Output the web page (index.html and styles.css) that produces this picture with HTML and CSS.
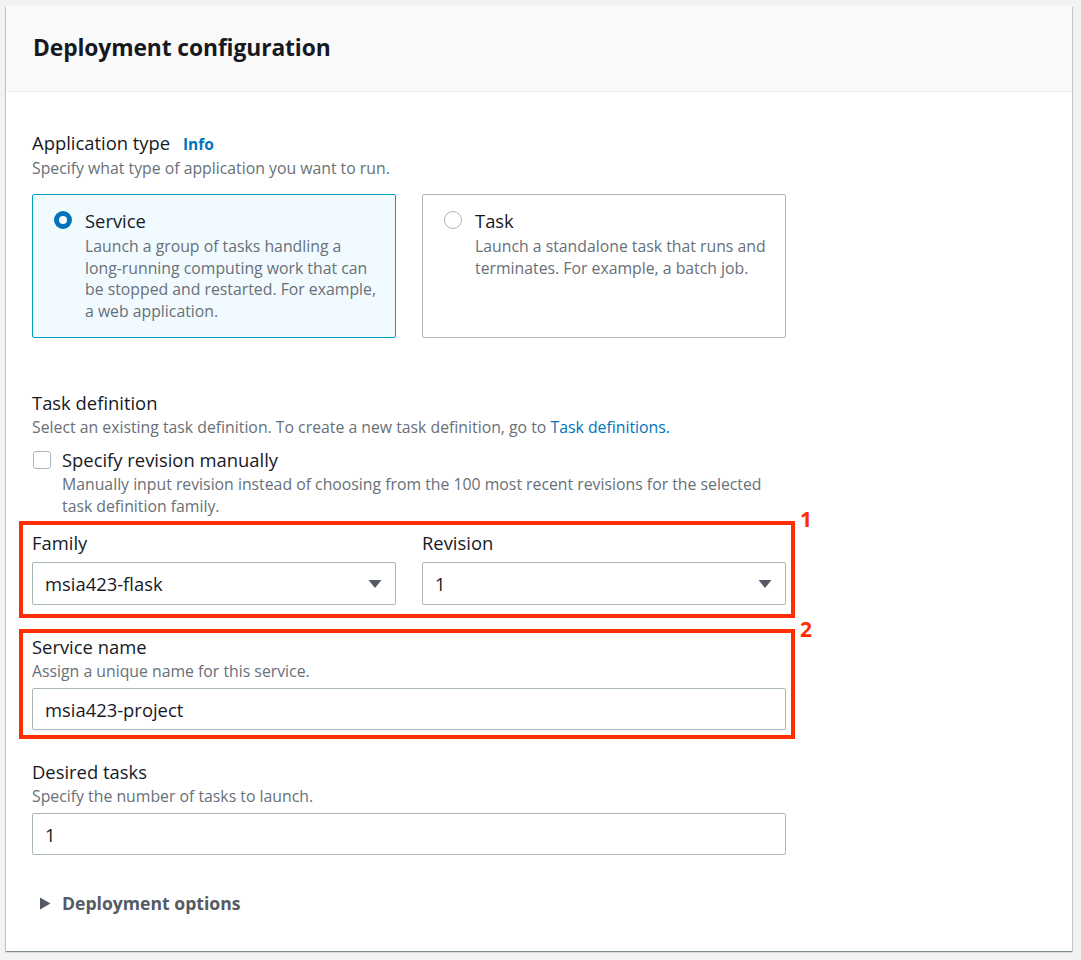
FILE: index.html
```html
<!DOCTYPE html>
<html>
<head>
<meta charset="utf-8">
<link rel="stylesheet" href="styles.css">
</head>
<body>
<div class="page">
  <div class="card">
    <div class="card-header">
      <h2 class="title">Deployment configuration</h2>
    </div>
    <div class="card-body">
      <div class="field">
        <div class="label">Application type <a class="info">Info</a></div>
        <div class="desc">Specify what type of application you want to run.</div>
        <div class="tiles">
          <div class="tile selected">
            <span class="radio on"></span>
            <div class="tile-text">
              <div class="tile-title">Service</div>
              <div class="tile-desc">Launch a group of tasks handling a long-running computing work that can be stopped and restarted. For example, a web application.</div>
            </div>
          </div>
          <div class="tile">
            <span class="radio"></span>
            <div class="tile-text">
              <div class="tile-title">Task</div>
              <div class="tile-desc">Launch a standalone task that runs and terminates. For example, a batch job.</div>
            </div>
          </div>
        </div>
      </div>

      <div class="field taskdef">
        <div class="label">Task definition</div>
        <div class="desc">Select an existing task definition. To create a new task definition, go to <a class="link">Task definitions.</a></div>
        <div class="check-row">
          <span class="checkbox"></span>
          <div class="check-text">
            <div class="check-title">Specify revision manually</div>
            <div class="desc check-desc">Manually input revision instead of choosing from the 100 most recent revisions for the selected task definition family.</div>
          </div>
        </div>
      </div>

      <div class="mark mark-one">
        <span class="mark-num">1</span>
        <div class="cols">
          <div class="col">
            <div class="label">Family</div>
            <div class="select">
              <span class="value">msia423-flask</span>
              <svg class="caret" width="14" height="10" viewBox="0 0 14 10"><path d="M0.5 1 L13.5 1 L7 9 Z" fill="#545b64"/></svg>
            </div>
          </div>
          <div class="col">
            <div class="label">Revision</div>
            <div class="select">
              <span class="value">1</span>
              <svg class="caret" width="14" height="10" viewBox="0 0 14 10"><path d="M0.5 1 L13.5 1 L7 9 Z" fill="#545b64"/></svg>
            </div>
          </div>
        </div>
      </div>

      <div class="mark mark-two">
        <span class="mark-num">2</span>
        <div class="label">Service name</div>
        <div class="desc">Assign a unique name for this service.</div>
        <div class="input">msia423-project</div>
      </div>

      <div class="field desired">
        <div class="label">Desired tasks</div>
        <div class="desc">Specify the number of tasks to launch.</div>
        <div class="input">1</div>
      </div>

      <div class="expander">
        <svg class="expand-caret" width="12" height="13" viewBox="0 0 12 13"><path d="M1 0.5 L11.5 6.5 L1 12.5 Z" fill="#545b64"/></svg>
        <span>Deployment options</span>
      </div>
    </div>
  </div>
</div>
</body>
</html>
```

FILE: styles.css
```css
* { box-sizing: border-box; }
html, body { margin: 0; padding: 0; }
body {
  background: #f2f3f3;
  font-family: "Open Sans", "Noto Sans", sans-serif;
  color: #16191f;
}
.page {
  padding: 6px 9px 0 6px;
  height: 960px;
  overflow: hidden;
}
.card {
  background: #fff;
  width: 1066px;
  height: 945px;
  box-shadow: 0 1px 1px 0 rgba(0,28,36,0.3), 1px 1px 1px 0 rgba(0,28,36,0.15), -1px 1px 1px 0 rgba(0,28,36,0.15);
}
.card-header {
  background: #fafafa;
  border-bottom: 1px solid #eaeded;
  padding: 28px 27px 29px;
}
.title {
  margin: 0;
  font-size: 22.8px;
  line-height: 28px;
  font-weight: 700;
  letter-spacing: -0.1px;
}
.card-body {
  padding: 39px 0 0 26px;
  width: 806px;
}
.field { width: 754px; }
.label {
  font-size: 18.4px;
  line-height: 24px;
  color: #16191f;
}
.info {
  color: #0073bb;
  font-weight: 700;
  font-size: 15.5px;
  margin-left: 8px;
}
.desc {
  font-size: 15.8px;
  line-height: 24px;
  color: #687078;
}
.link { color: #0073bb; }
.tiles {
  display: grid;
  grid-template-columns: 364px 364px;
  gap: 26px;
  margin-top: 14px;
}
.tile {
  display: flex;
  align-items: flex-start;
  gap: 13px;
  border: 1px solid #aab7b8;
  border-radius: 2px;
  padding: 16px 18px 16px 21px;
  height: 144px;
}
.tile.selected {
  background: #f1faff;
  border-color: #00a1c9;
}
.radio {
  flex: none;
  width: 18px;
  height: 18px;
  border-radius: 50%;
  border: 1.5px solid #aab7b8;
  background: #fff;
  margin-top: 0;
}
.radio.on {
  border: 5px solid #0073bb;
}
.tile-title {
  font-size: 18.4px;
  line-height: 20px;
}
.tile-desc {
  font-size: 15.8px;
  line-height: 21.5px;
  color: #687078;
  margin-top: 5px;
}
.taskdef { margin-top: 53px; }
.check-row {
  display: flex;
  gap: 11px;
  margin-top: 9px;
}
.checkbox {
  flex: none;
  width: 18px;
  height: 18px;
  border: 1.5px solid #aab7b8;
  border-radius: 3px;
  margin: 3px 0 0 1px;
}
.check-title {
  font-size: 18.4px;
  line-height: 24px;
}
.check-desc {
  line-height: 22px;
  margin-top: 1px;
}
.mark {
  position: relative;
  border: 4px solid #ff2d00;
  margin-left: -13px;
  width: 776px;
  padding: 0 5px 0 9px;
}
.mark-num {
  position: absolute;
  left: calc(100% + 9px);
  font-size: 21px;
  font-weight: 700;
  color: #ff2d00;
  line-height: 18px;
}
.mark-one {
  margin-top: 4px;
  padding-top: 6px;
  padding-bottom: 9px;
}
.mark-one .mark-num { top: -15px; }
.mark-two {
  margin-top: 11px;
  padding-top: 2px;
  padding-bottom: 5px;
}
.mark-two .mark-num { top: -13px; }
.cols {
  display: grid;
  grid-template-columns: 364px 364px;
  gap: 26px;
}
.select, .input {
  border: 1px solid #aab7b8;
  border-radius: 2px;
  height: 43px;
  display: flex;
  align-items: center;
  padding: 0 13px 0 12px;
  font-size: 18.4px;
  color: #16191f;
  background: #fff;
}
.select { margin-top: 7px; justify-content: space-between; }
.input { height: 42px; }
.mark-two .input { margin-top: 5px; }
.desired { margin-top: 21px; }
.desired .input { margin-top: 5px; }
.expander {
  margin-top: 36px;
  display: flex;
  align-items: center;
  gap: 11px;
  padding-left: 7px;
  font-size: 17.6px;
  line-height: 24px;
  font-weight: 700;
  color: #545b64;
}
```
